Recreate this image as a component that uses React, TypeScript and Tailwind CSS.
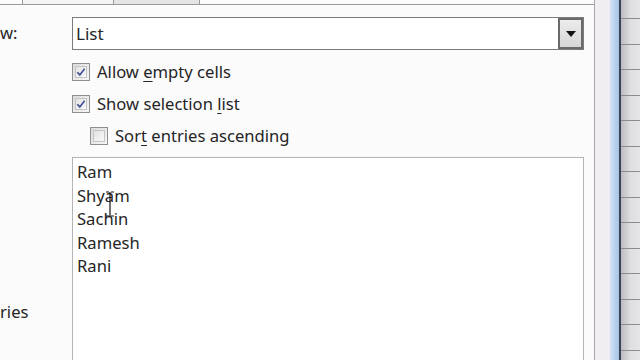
import React from "react"

const entries = ["Ram", "Shyam", "Sachin", "Ramesh", "Rani"]

function CheckBox({ checked }: { checked: boolean }) {
  return (
    <div className="w-[18px] h-[18px] border border-[#8e8f8f] bg-gradient-to-br from-[#dcdcdc] to-[#f6f6f6] p-[2px] shrink-0">
      <div className="w-full h-full border border-[#c4c4c4] bg-gradient-to-br from-[#e2e2e2] to-[#fafafa] flex items-center justify-center">
        {checked && (
          <svg width="11" height="10" viewBox="0 0 11 10">
            <path d="M1.5 5.2 L4.2 8.2 L9.5 1.5" fill="none" stroke="#3d4f95" strokeWidth="1.8" />
          </svg>
        )}
      </div>
    </div>
  )
}

// underline a single access-key letter
function Label({ before, key_, after }: { before: string; key_: string; after: string }) {
  return (
    <span className="text-[16.6px] text-[#252525] leading-none">
      {before}
      <span className="underline underline-offset-[3px]">{key_}</span>
      {after}
    </span>
  )
}

export default function App() {
  return (
    <div className="w-[640px] h-[360px] overflow-hidden flex bg-[#fbfbfc] font-['Noto_Sans','Open_Sans',sans-serif]">
      {/* dialog panel */}
      <div className="w-[595px] shrink-0 flex flex-col border-r border-[#a8a8a8] relative">
        {/* tabs */}
        <div className="h-[5px] flex border-b border-[#9c9c9c] shrink-0">
          <div className="ml-[22px] w-[92px] border-x border-[#9a9a9a] bg-[#f3f3f3]" />
          <div className="w-[86px] border-r border-[#9a9a9a] bg-[#e4e4e4]" />
        </div>

        {/* allow */}
        <div className="flex items-center mt-[12px] h-[33px]">
          <div className="w-[72px] text-[16.6px] text-[#252525]">w:</div>
          <div className="w-[512px] h-[33px] border border-[#7c7c7c] bg-white flex items-center">
            <span className="pl-[3px] flex-1 text-[17px] text-[#252525]">List</span>
            <div className="w-[25px] h-full border-2 border-[#6a6a6a] bg-gradient-to-b from-[#ececec] to-[#d6d6d6] flex items-center justify-center">
              <svg width="10" height="6" viewBox="0 0 10 6">
                <path d="M0 0 H10 L5 6 Z" fill="#111" />
              </svg>
            </div>
          </div>
        </div>

        {/* options */}
        <div className="flex flex-col pl-[72px] mt-[13px]">
          <div className="flex items-center gap-[7px] h-[18px]">
            <CheckBox checked />
            <Label before="Allow " key_="e" after="mpty cells" />
          </div>
          <div className="flex items-center gap-[7px] h-[18px] mt-[14px]">
            <CheckBox checked />
            <Label before="Show selection " key_="l" after="ist" />
          </div>
          <div className="flex items-center gap-[7px] h-[18px] mt-[14px] pl-[18px]">
            <CheckBox checked={false} />
            <Label before="Sor" key_="t" after=" entries ascending" />
          </div>
        </div>

        {/* entries */}
        <div className="flex mt-[12px] flex-1">
          <div className="w-[72px] flex flex-col justify-start pt-[143px] text-[16.6px] text-[#252525]">ries</div>
          <div className="w-[512px] border border-[#b4b4b4] border-b-0 bg-white pt-[2px] pl-[4px] relative">
            {entries.map((e) => (
              <div key={e} className="h-[23.5px] text-[16.6px] text-[#252525] leading-[23.5px]">
                {e}
              </div>
            ))}
            {/* mouse I-beam */}
            <svg className="absolute left-[32px] top-[33px]" width="10" height="26" viewBox="0 0 10 26">
              <path d="M1 1 H4 M6 1 H9 M5 1 V25 M1 25 H4 M6 25 H9" fill="none" stroke="#111" strokeWidth="1.2" />
            </svg>
          </div>
        </div>
      </div>

      {/* background window edge */}
      <div className="w-[15px] shrink-0 bg-[#f0eef1]" />
      <div className="w-[9px] shrink-0 bg-gradient-to-r from-[#d4e2f4] via-[#bcd3ef] to-[#a9c2e4]" />
      <div className="w-[2px] shrink-0 bg-[#3c4558]" />
      <div className="flex-1 flex flex-col bg-gradient-to-r from-[#bdbdc2] via-[#dedde0] to-[#e6e5e8]">
        <div className="h-[18px] shrink-0" />
        {Array.from({ length: 14 }).map((_, i) => (
          <div key={i} className="h-[25.5px] shrink-0 border-t border-[#8c8c92]" />
        ))}
      </div>
    </div>
  )
}
